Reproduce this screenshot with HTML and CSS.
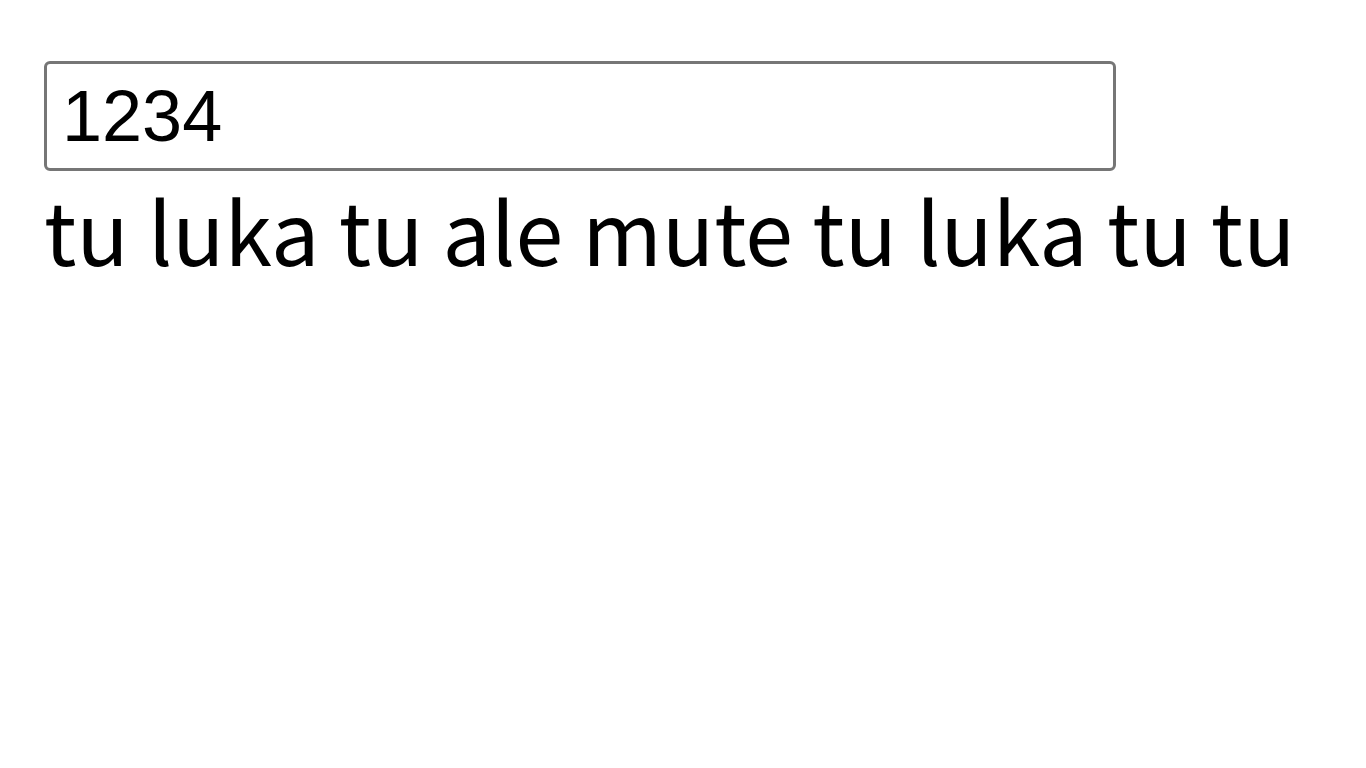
FILE: index.html
```html
<!DOCTYPE html>
<html lang="tok">
<head>
    <meta charset="UTF-8">
    <meta name="viewport" content="width=device-width, initial-scale=1.0">
    <title>nanpa</title>
    <link rel="stylesheet" href="styles.css">
</head>
<body>
    <div class="container">
        <input class="number-input" type="text" value="1234">
        <p class="words">tu luka tu ale mute tu luka tu tu</p>
    </div>
</body>
</html>
```

FILE: styles.css
```css
body {
    margin: 0;
    background-color: #fff;
    color: #000;
}

.container {
    padding: 61px 44px 0;
}

.number-input {
    display: block;
    box-sizing: border-box;
    width: 1072px;
    height: 110px;
    margin: 0;
    padding: 0 15px;
    border: 3px solid #767676;
    border-radius: 6px;
    font-family: "Liberation Sans", Arial, sans-serif;
    font-size: 72px;
    color: #000;
    background-color: #fff;
    outline: none;
}

.words {
    margin: 0;
    font-family: "Noto Sans CJK SC", "Source Sans Pro", sans-serif;
    font-size: 86px;
    line-height: 1.35;
    white-space: nowrap;
}
```
